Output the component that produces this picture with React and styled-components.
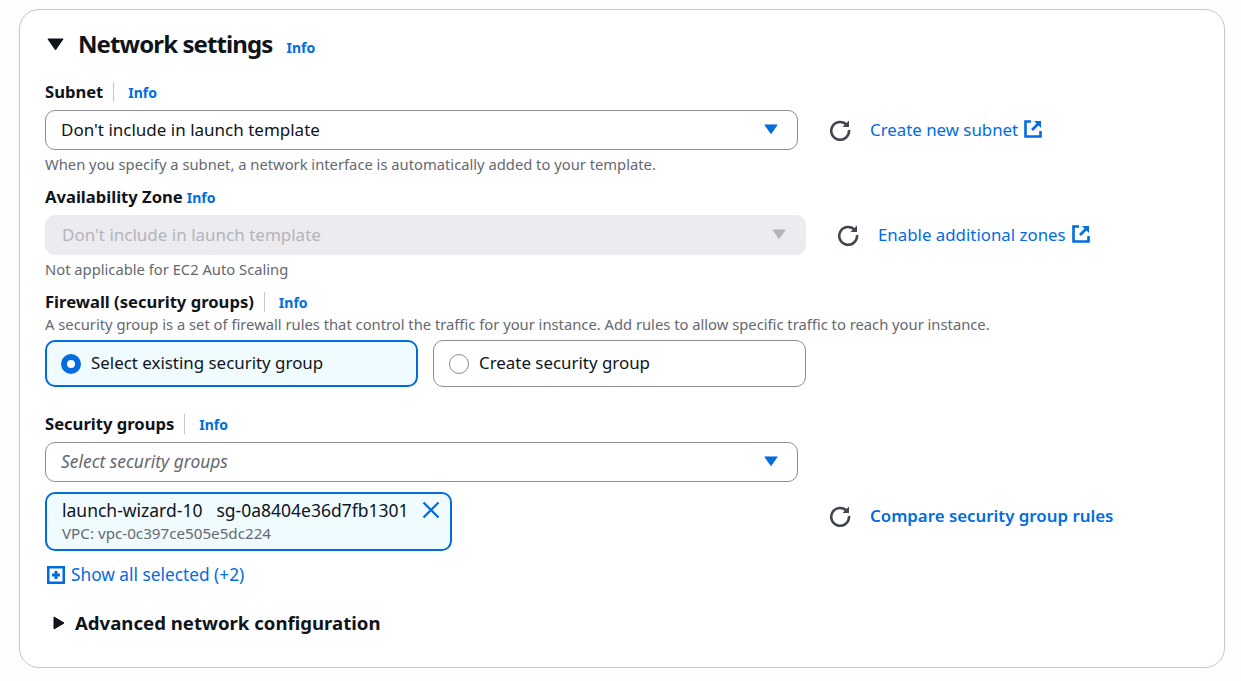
import styled, { createGlobalStyle } from "styled-components";

const GlobalStyle = createGlobalStyle`
  body {
    margin: 0;
    background: #fdfdfd;
    font-family: "Noto Sans", "Open Sans", sans-serif;
    color: #0f141a;
  }
`;

const BLUE = "#006ce0";

const CaretDown = ({ size = 14, color = BLUE }) => (
  <svg width={size} height={size * 0.75} viewBox="0 0 16 12">
    <path d="M1 1h14L8 11z" fill={color} stroke={color} strokeWidth="1" strokeLinejoin="round" />
  </svg>
);

const Refresh = () => (
  <svg width="22" height="22" viewBox="0 0 22 22" fill="none" stroke="#424650" strokeWidth="2.6">
    <path d="M17.8 6A8.9 8.9 0 1 0 20 11" />
    <path d="M20 1.5V8h-6.5z" fill="#424650" stroke="none" />
  </svg>
);

const External = () => (
  <svg width="18" height="18" viewBox="0 0 18 18" fill="none" stroke={BLUE} strokeWidth="2.6">
    <path d="M7 1.5H1.5v15h15V11" />
    <path d="M8 10l6-6" />
    <path d="M10 1h7v7z" fill={BLUE} stroke="none" />
  </svg>
);

const Close = () => (
  <svg width="18" height="18" viewBox="0 0 18 18" fill="none" stroke={BLUE} strokeWidth="2.2">
    <path d="M1.5 1.5l15 15M16.5 1.5l-15 15" />
  </svg>
);

const PlusBox = () => (
  <svg width="18" height="18" viewBox="0 0 18 18" fill="none" stroke={BLUE}>
    <rect x="1.25" y="1.25" width="15.5" height="15.5" strokeWidth="2.5" />
    <path d="M5 9h8M9 5v8" strokeWidth="3" />
  </svg>
);

const Card = styled.section`
  box-sizing: border-box;
  width: 1206px;
  height: 659px;
  margin: 9px 0 0 19px;
  padding: 18px 25px 0;
  background: #fff;
  border: 1px solid #c6c6cd;
  border-radius: 20px;
`;

const Header = styled.div`
  display: flex;
  align-items: center;
  height: 32px;
  margin-left: 2px;
`;

const HeaderCaret = styled.span`
  display: flex;
  width: 31px;
`;

const Title = styled.h2`
  margin: 0;
  font-size: 24px;
  font-weight: 700;
  line-height: 32px;
  letter-spacing: -0.9px;
`;

const Info = styled.a`
  color: ${BLUE};
  font-size: 14px;
  font-weight: 700;
  line-height: 20px;
  margin-top: 1px;
`;

const HeaderInfo = styled(Info)`
  margin: 8px 0 0 14px;
`;

const InlineInfo = styled(Info)`
  margin-left: 4px;
`;

const LabelRow = styled.div`
  display: flex;
  align-items: center;
  height: 22px;
  margin-top: ${(p) => p.$top}px;
`;

const Label = styled.label`
  font-size: 16.6px;
  font-weight: 700;
  line-height: 22px;
`;

const Divider = styled.span`
  width: 1px;
  height: 20px;
  margin: 0 14px 0 10px;
  background: #c6c6cd;
`;

const Row = styled.div`
  display: flex;
  align-items: center;
  margin-top: ${(p) => p.$top || 0}px;
`;

const Select = styled.div`
  box-sizing: border-box;
  display: flex;
  flex: none;
  align-items: center;
  justify-content: space-between;
  width: ${(p) => p.$width}px;
  height: 40px;
  padding: 0 19px 2px ${(p) => (p.$disabled ? 16 : 15)}px;
  font-size: 17px;
  border: 1px solid ${(p) => (p.$disabled ? "#ebebf0" : "#8c8c94")};
  border-radius: 10px;
  background: ${(p) => (p.$disabled ? "#ebebf0" : "#fff")};
  color: ${(p) => (p.$disabled ? "#b4b4bb" : "inherit")};
`;

const Placeholder = styled.span`
  font-style: italic;
  font-size: 17.4px;
  color: #656871;
`;

const Actions = styled.div`
  display: flex;
  align-items: center;
  margin: ${(p) => p.$raise || 0}px 0 0 ${(p) => p.$left || 31}px;
  gap: 19px;
`;

const ActionLink = styled.a`
  display: flex;
  align-items: center;
  gap: 6px;
  margin-top: ${(p) => (p.$bold ? 0 : -2)}px;
  color: ${BLUE};
  font-size: 16.85px;
  font-weight: ${(p) => (p.$bold ? 600 : 400)};
`;

const Help = styled.p`
  margin: ${(p) => p.$top || 4}px 0 0;
  font-size: 14.75px;
  line-height: 20px;
  color: #656871;
`;

const Tiles = styled.div`
  display: flex;
  gap: 15px;
  width: 761px;
  margin-top: 6px;
`;

const Tile = styled.div`
  box-sizing: border-box;
  display: flex;
  flex: 1;
  align-items: center;
  gap: 10px;
  height: 47px;
  padding: 0 ${(p) => (p.$on ? 14 : 15)}px 2px;
  font-size: 16.9px;
  border: ${(p) => (p.$on ? `2px solid ${BLUE}` : "1px solid #8c8c94")};
  border-radius: 10px;
  background: ${(p) => (p.$on ? "#f0fbff" : "#fff")};
`;

const Radio = styled.span`
  box-sizing: border-box;
  flex: none;
  width: 20px;
  height: 20px;
  margin-top: 2px;
  border-radius: 50%;
  border: ${(p) => (p.$on ? `6px solid ${BLUE}` : "1.5px solid #8c8c94")};
  background: #fff;
`;

const Token = styled.div`
  box-sizing: border-box;
  position: relative;
  flex: none;
  width: 407px;
  height: 59px;
  padding: 4px 15px;
  border: 2px solid ${BLUE};
  border-radius: 10px;
  background: #f0fbff;
`;

const TokenName = styled.div`
  display: flex;
  gap: 14px;
  font-size: 17.5px;
  line-height: 24px;
`;

const TokenMeta = styled.div`
  margin-top: 1px;
  font-size: 15.2px;
  line-height: 20px;
  color: #656871;
`;

const TokenClose = styled.span`
  position: absolute;
  top: 7px;
  right: 10px;
  display: flex;
`;

const ShowAll = styled.a`
  display: flex;
  align-items: center;
  gap: 6px;
  height: 24px;
  margin: 12px 0 0 2px;
  color: ${BLUE};
  font-size: 17.3px;
  line-height: 22px;
`;

const Advanced = styled.div`
  display: flex;
  align-items: center;
  gap: 10px;
  margin: 24px 0 0 8px;
  font-size: 18.6px;
  font-weight: 700;
  line-height: 24px;
`;

const App = () => {
  return (
    <>
      <GlobalStyle />
      <Card>
        <Header>
          <HeaderCaret>
            <CaretDown size={17} color="#0f141a" />
          </HeaderCaret>
          <Title>Network settings</Title>
          <HeaderInfo>Info</HeaderInfo>
        </Header>

        <LabelRow $top={21}>
          <Label>Subnet</Label>
          <Divider />
          <Info>Info</Info>
        </LabelRow>
        <Row $top={7}>
          <Select $width={753}>
            <span>Don't include in launch template</span>
            <CaretDown />
          </Select>
          <Actions>
            <Refresh />
            <ActionLink>
              Create new subnet <External />
            </ActionLink>
          </Actions>
        </Row>
        <Help>When you specify a subnet, a network interface is automatically added to your template.</Help>

        <LabelRow $top={12}>
          <Label>Availability Zone</Label>
          <InlineInfo>Info</InlineInfo>
        </LabelRow>
        <Row $top={7}>
          <Select $width={761} $disabled>
            <span>Don't include in launch template</span>
            <CaretDown color="#b4b4bb" />
          </Select>
          <Actions>
            <Refresh />
            <ActionLink>
              Enable additional zones <External />
            </ActionLink>
          </Actions>
        </Row>
        <Help>Not applicable for EC2 Auto Scaling</Help>

        <LabelRow $top={12}>
          <Label>Firewall (security groups)</Label>
          <Divider />
          <Info>Info</Info>
        </LabelRow>
        <Help $top={1}>
          A security group is a set of firewall rules that control the traffic for your instance. Add rules to allow
          specific traffic to reach your instance.
        </Help>
        <Tiles>
          <Tile $on>
            <Radio $on />
            Select existing security group
          </Tile>
          <Tile>
            <Radio />
            Create security group
          </Tile>
        </Tiles>

        <LabelRow $top={26}>
          <Label>Security groups</Label>
          <Divider />
          <Info>Info</Info>
        </LabelRow>
        <Row $top={7}>
          <Select $width={753}>
            <Placeholder>Select security groups</Placeholder>
            <CaretDown />
          </Select>
        </Row>
        <Row $top={10}>
          <Token>
            <TokenName>
              <span>launch-wizard-10</span>
              <span>sg-0a8404e36d7fb1301</span>
            </TokenName>
            <TokenMeta>VPC: vpc-0c397ce505e5dc224</TokenMeta>
            <TokenClose>
              <Close />
            </TokenClose>
          </Token>
          <Actions $left={377} $raise={-12}>
            <Refresh />
            <ActionLink $bold>Compare security group rules</ActionLink>
          </Actions>
        </Row>
        <ShowAll>
          <PlusBox />
          Show all selected (+2)
        </ShowAll>
        <Advanced>
          <svg width="12" height="14" viewBox="0 0 12 14">
            <path d="M1 1v12l10-6z" fill="#0f141a" stroke="#0f141a" strokeLinejoin="round" />
          </svg>
          Advanced network configuration
        </Advanced>
      </Card>
    </>
  );
};

export default App;
